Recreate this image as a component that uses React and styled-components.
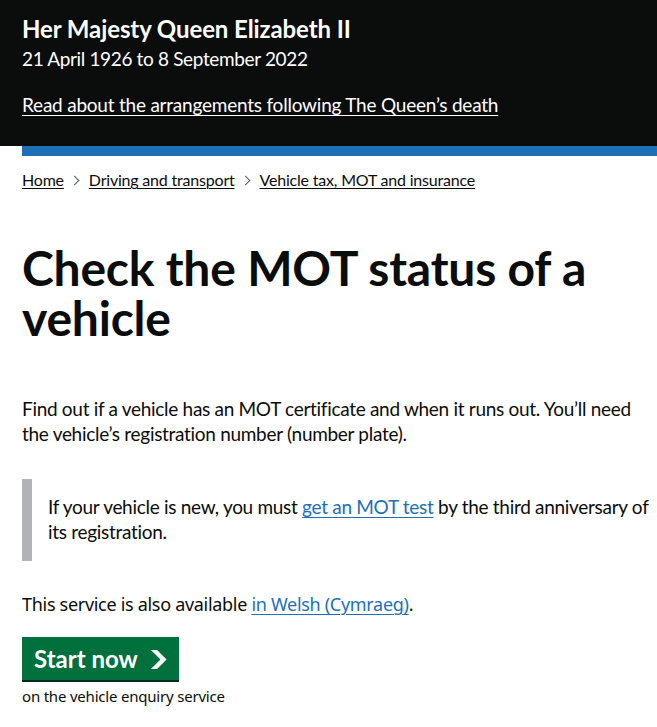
import React from 'react';
import styled, { createGlobalStyle } from 'styled-components';

const GlobalStyle = createGlobalStyle`
  body {
    margin: 0;
    font-family: Lato, "Noto Sans", sans-serif;
    color: #0b0c0c;
    background: #fff;
  }
`;

const Banner = styled.div`
  background: #0b0c0c;
  color: #fff;
  padding: 14px 22px 29px;
`;

const BannerTitle = styled.h2`
  margin: 0;
  font-size: 24px;
  line-height: 30px;
  font-weight: 700;
  letter-spacing: -0.1px;
`;

const BannerDates = styled.p`
  margin: 2px 0 0;
  font-size: 19px;
  line-height: 25px;
  letter-spacing: -0.35px;
`;

const BannerLink = styled.a`
  display: inline-block;
  margin-top: 21px;
  font-size: 19px;
  line-height: 25px;
  letter-spacing: -0.22px;
  color: #fff;
  text-decoration: underline;
  text-decoration-thickness: 1px;
  text-underline-offset: 3px;
`;

const BlueBar = styled.div`
  height: 10px;
  margin-left: 22px;
  background: #1d70b8;
`;

const Main = styled.main`
  padding: 0 0 0 22px;
`;

const Crumbs = styled.ol`
  display: flex;
  align-items: center;
  list-style: none;
  margin: 14px 0 0;
  padding: 0;
  font-size: 16px;
  line-height: 20px;
  letter-spacing: -0.2px;
`;

const Crumb = styled.li`
  display: flex;
  align-items: center;
`;

const CrumbLink = styled.a`
  color: #0b0c0c;
  text-decoration: underline;
  text-decoration-thickness: 1px;
  text-underline-offset: 2px;
`;

const Chevron = styled.span`
  display: inline-block;
  width: 6px;
  height: 6px;
  margin: 1px 11px 0 7px;
  border-top: 1px solid #505a5f;
  border-right: 1px solid #505a5f;
  transform: rotate(45deg);
`;

const Heading = styled.h1`
  margin: 53px 0 0;
  font-size: 48px;
  line-height: 50px;
  font-weight: 700;
  letter-spacing: -0.2px;
`;

const Body = styled.p`
  margin: ${p => p.$top || 0}px 0 0;
  font-size: 19px;
  line-height: 25px;
  letter-spacing: -0.3px;
  padding-right: 15px;
`;

const Inset = styled.div`
  margin-top: 33px;
  padding: 15px 0 17px 16px;
  border-left: 10px solid #b1b4b6;
  font-size: 19px;
  line-height: 25px;
  letter-spacing: -0.3px;
`;

const Link = styled.a`
  color: #1d70b8;
  text-decoration: underline;
  text-decoration-thickness: 1px;
  text-underline-offset: 3px;
`;

const Alt = styled.p`
  margin: 31px 0 0;
  font-family: "Noto Sans", sans-serif;
  font-size: 18px;
  line-height: 25px;
  letter-spacing: -0.3px;
`;

const StartButton = styled.a`
  display: inline-flex;
  align-items: center;
  margin-top: 20px;
  padding: 8px 10px 7px;
  border: 2px solid transparent;
  background: #00703c;
  box-shadow: 0 2px 0 #002d18;
  color: #fff;
  font-size: 24px;
  line-height: 1;
  font-weight: 700;
  text-decoration: none;
`;

const ButtonIcon = styled.svg`
  margin-left: 12px;
  flex-shrink: 0;
`;

const Hint = styled.p`
  margin: 6px 0 0;
  font-family: "Noto Sans", sans-serif;
  font-size: 15px;
  line-height: 20px;
  letter-spacing: -0.2px;
`;

const App = () => (
  <>
    <GlobalStyle />
    <Banner>
      <BannerTitle>Her Majesty Queen Elizabeth II</BannerTitle>
      <BannerDates>21 April 1926 to 8 September 2022</BannerDates>
      <BannerLink href="#">Read about the arrangements following The Queen’s death</BannerLink>
    </Banner>
    <BlueBar />
    <Main>
      <Crumbs>
        <Crumb><CrumbLink href="#">Home</CrumbLink><Chevron /></Crumb>
        <Crumb><CrumbLink href="#">Driving and transport</CrumbLink><Chevron /></Crumb>
        <Crumb><CrumbLink href="#">Vehicle tax, MOT and insurance</CrumbLink></Crumb>
      </Crumbs>
      <Heading>Check the MOT status of a vehicle</Heading>
      <Body $top={53}>
        Find out if a vehicle has an MOT certificate and when it runs out. You’ll need the vehicle’s registration number (number plate).
      </Body>
      <Inset>
        If your vehicle is new, you must <Link href="#">get an MOT test</Link> by the third anniversary of its registration.
      </Inset>
      <Alt>
        This service is also available <Link href="#">in Welsh (Cymraeg)</Link>.
      </Alt>
      <StartButton href="#">
        Start now
        <ButtonIcon width="17.5" height="19" viewBox="0 0 33 40" aria-hidden="true">
          <path fill="currentColor" d="M0 0h13l20 20-20 20H0l20-20z" />
        </ButtonIcon>
      </StartButton>
      <Hint>on the vehicle enquiry service</Hint>
    </Main>
  </>
);

export default App;
